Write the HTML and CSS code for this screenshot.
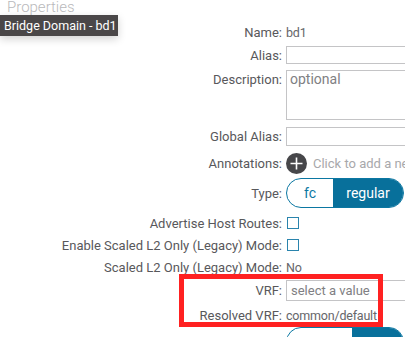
FILE: index.html
```html
<!DOCTYPE html>
<html lang="en">
<head>
    <meta charset="UTF-8">
    <meta name="viewport" content="width=device-width, initial-scale=1.0">
    <title>Bridge Domain - bd1</title>
    <link rel="stylesheet" href="styles.css">
</head>
<body>
    <div class="page">
        <h2 class="panel-title">Properties</h2>
        <div class="tooltip">Bridge Domain - bd1</div>

        <form class="props">
            <div class="row row-name">
                <label class="lbl">Name:</label>
                <span class="val">bd1</span>
            </div>
            <div class="row row-alias">
                <label class="lbl" for="alias">Alias:</label>
                <input type="text" id="alias" class="field">
            </div>
            <div class="row row-desc">
                <label class="lbl" for="desc">Description:</label>
                <textarea id="desc" class="field area" placeholder="optional"></textarea>
            </div>
            <div class="row row-galias">
                <label class="lbl" for="galias">Global Alias:</label>
                <input type="text" id="galias" class="field">
            </div>
            <div class="row row-annot">
                <label class="lbl">Annotations:</label>
                <span class="add-btn">
                    <svg width="21" height="21" viewBox="0 0 21 21">
                        <circle cx="10.5" cy="10.5" r="10.5" fill="#47474a"/>
                        <path d="M10.5 4.5v12M4.5 10.5h12" stroke="#fff" stroke-width="1.6"/>
                    </svg>
                </span>
                <span class="hint">Click to add a new annotation</span>
            </div>
            <div class="row row-type">
                <label class="lbl">Type:</label>
                <div class="toggle">
                    <span class="seg">fc</span>
                    <span class="seg on">regular</span>
                </div>
            </div>
            <div class="row row-check">
                <label class="lbl">Advertise Host Routes:</label>
                <span class="box"></span>
            </div>
            <div class="row row-check">
                <label class="lbl">Enable Scaled L2 Only (Legacy) Mode:</label>
                <span class="box"></span>
            </div>
            <div class="row row-check">
                <label class="lbl">Scaled L2 Only (Legacy) Mode:</label>
                <span class="val">No</span>
            </div>
            <div class="row row-vrf">
                <label class="lbl" for="vrf">VRF:</label>
                <input type="text" id="vrf" class="field" placeholder="select a value">
            </div>
            <div class="row row-rvrf">
                <label class="lbl">Resolved VRF:</label>
                <span class="val">common/default</span>
            </div>
            <div class="row row-next">
                <span class="lbl"></span>
                <div class="toggle toggle-next">
                    <span class="seg"></span>
                    <span class="seg on"></span>
                </div>
            </div>
        </form>

        <div class="highlight"></div>
    </div>
</body>
</html>
```

FILE: styles.css
```css
body {
    margin: 0;
    background: #fff;
    font-family: 'Roboto', 'Liberation Sans', sans-serif;
    font-size: 13px;
    color: #58585b;
    overflow: hidden;
}
.page {
    position: relative;
    width: 405px;
    height: 337px;
    overflow: hidden;
}
.panel-title {
    margin: 0;
    position: absolute;
    left: 7px;
    top: -2px;
    font-size: 15px;
    font-weight: 300;
    color: #b9b9bb;
}
.tooltip {
    position: absolute;
    left: 0;
    top: 15px;
    height: 21px;
    width: 110px;
    padding: 0 4px;
    line-height: 21px;
    background: #4a4748;
    color: #fff;
    font-size: 12.5px;
    box-shadow: 0 3px 8px rgba(0, 0, 0, 0.18);
    white-space: nowrap;
}
.props {
    padding-top: 22px;
}
.row {
    display: flex;
    align-items: center;
}
.lbl {
    flex: 0 0 282px;
    margin-right: 4px;
    text-align: right;
    white-space: nowrap;
}
.val {
    color: #66666a;
    font-size: 12.5px;
    letter-spacing: -0.2px;
    white-space: nowrap;
}
.row-name {
    height: 20px;
    margin-bottom: 4px;
}
.field {
    box-sizing: border-box;
    flex: 0 0 140px;
    height: 18px;
    margin: 0;
    padding: 0 4px;
    border: 1px solid #c4c4c6;
    border-radius: 0;
    font-family: inherit;
    font-size: 13px;
    color: #58585b;
    background: #fff;
}
.field::placeholder {
    color: #808083;
}
.row-alias {
    margin-bottom: 6px;
}
.row-desc {
    align-items: flex-start;
    margin-bottom: 7px;
}
.row-desc .lbl {
    padding-top: 2px;
}
.area {
    height: 50px;
    padding: 0 3px;
    font-size: 14px;
    resize: none;
}
.row-galias {
    margin-bottom: 7px;
}
.row-galias .field {
    height: 19px;
}
.row-annot {
    height: 21px;
    margin-bottom: 4px;
}
.add-btn {
    display: flex;
    width: 21px;
    height: 21px;
    margin-right: 6px;
}
.hint {
    color: #a8a8ab;
    font-size: 13px;
    white-space: nowrap;
}
.toggle {
    box-sizing: border-box;
    display: flex;
    flex: 0 0 118px;
    height: 30px;
    border: 1px solid #0b77a2;
    border-radius: 15px;
    overflow: hidden;
    font-size: 14px;
}
.seg {
    display: flex;
    align-items: center;
    justify-content: center;
    width: 46px;
    color: #0b77a2;
}
.seg.on {
    flex: 1;
    background: #08709b;
    color: #fff;
}
.row-type {
    margin-bottom: 4px;
}
.row-check {
    height: 22px;
}
.box {
    box-sizing: border-box;
    width: 12px;
    height: 12px;
    margin-left: 1px;
    border: 1px solid #2a84ad;
}
.row-vrf {
    margin-top: 2px;
    margin-bottom: 4px;
}
.row-vrf .field {
    height: 21px;
}
.row-rvrf {
    height: 20px;
}
.row-next {
    margin-top: 2px;
}
.toggle-next .seg {
    width: 65px;
}
.highlight {
    position: absolute;
    left: 179px;
    top: 274px;
    width: 194px;
    height: 43px;
    border: 5px solid #ff2121;
}
```
